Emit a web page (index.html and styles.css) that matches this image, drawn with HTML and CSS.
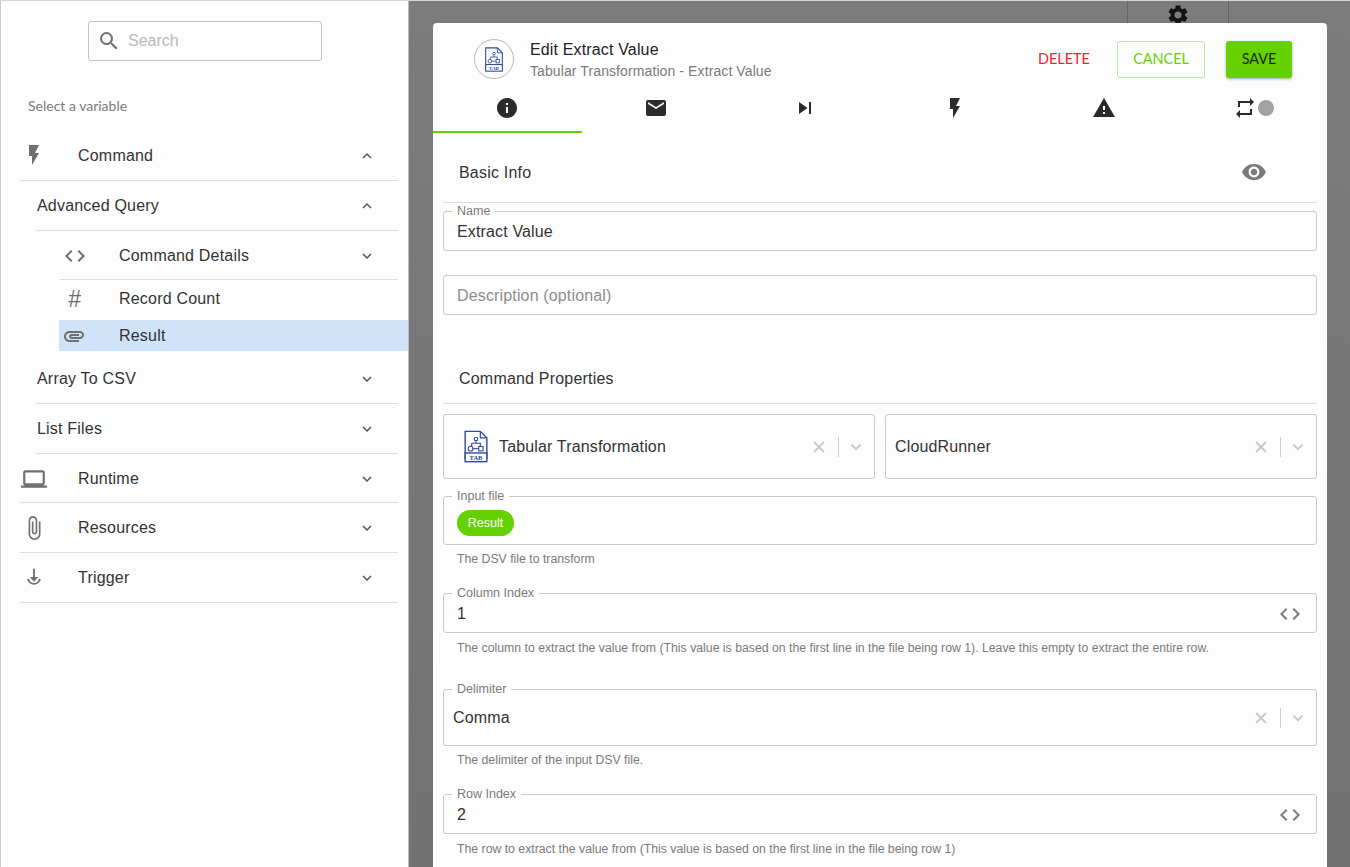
FILE: index.html
```html
<!DOCTYPE html>
<html lang="en">
<head>
    <meta charset="UTF-8">
    <title>Edit Extract Value</title>
    <link rel="stylesheet" href="styles.css">
</head>
<body>
    <svg class="defs" width="0" height="0">
        <symbol id="i-search" viewBox="0 0 24 24"><path d="M15.5 14h-.79l-.28-.27A6.471 6.471 0 0 0 16 9.5 6.5 6.5 0 1 0 9.5 16c1.61 0 3.09-.59 4.23-1.57l.27.28v.79l5 4.99L20.49 19l-4.99-5zm-6 0C7.01 14 5 11.99 5 9.5S7.01 5 9.5 5 14 7.01 14 9.5 11.99 14 9.5 14z"/></symbol>
        <symbol id="i-flash" viewBox="0 0 24 24"><path d="M7 2v11h3v9l7-12h-4l4-8z"/></symbol>
        <symbol id="i-code" viewBox="0 0 24 24"><path d="M9.4 16.6L4.8 12l4.6-4.6L8 6l-6 6 6 6 1.4-1.4zm5.2 0l4.6-4.6-4.6-4.6L16 6l6 6-6 6-1.4-1.4z"/></symbol>
        <symbol id="i-down" viewBox="0 0 24 24"><path d="M16.59 8.59L12 13.17 7.41 8.59 6 10l6 6 6-6z"/></symbol>
        <symbol id="i-up" viewBox="0 0 24 24"><path d="M12 8l-6 6 1.41 1.41L12 10.83l4.59 4.58L18 14z"/></symbol>
        <symbol id="i-attachment" viewBox="0 0 24 24"><path d="M2 12.5C2 9.46 4.46 7 7.5 7H18c2.21 0 4 1.79 4 4s-1.79 4-4 4H9.5C8.12 15 7 13.88 7 12.5S8.12 10 9.5 10H17v2H9.41c-.55 0-.55 1 0 1H18c1.1 0 2-.9 2-2s-.9-2-2-2H7.5C5.57 9 4 10.57 4 12.5S5.57 16 7.5 16H17v2H7.5C4.46 18 2 15.54 2 12.5z"/></symbol>
        <symbol id="i-laptop" viewBox="0 0 24 24"><path d="M20 18c1.1 0 1.99-.9 1.99-2L22 6c0-1.1-.9-2-2-2H4c-1.1 0-2 .9-2 2v10c0 1.1.9 2 2 2H0v2h24v-2h-4zM4 6h16v10H4V6z"/></symbol>
        <symbol id="i-clip" viewBox="0 0 24 24"><path d="M16.5 6v11.5c0 2.21-1.79 4-4 4s-4-1.79-4-4V5c0-1.38 1.12-2.5 2.5-2.5s2.5 1.12 2.5 2.5v10.5c0 .55-.45 1-1 1s-1-.45-1-1V6H10v9.5c0 1.38 1.12 2.5 2.5 2.5s2.5-1.12 2.5-2.5V5c0-2.21-1.79-4-4-4S7 2.79 7 5v12.5c0 3.04 2.46 5.5 5.5 5.5s5.5-2.46 5.5-5.5V6h-1.5z"/></symbol>
        <symbol id="i-trigger" viewBox="0 0 24 24"><path d="M11 2h2v9h3.5L12 16l-4.5-5H11z"/><path d="M4.5 13h2.2a5.4 5.4 0 0 0 10.6 0h2.2a7.6 7.6 0 0 1-15 0z"/></symbol>
        <symbol id="i-info" viewBox="0 0 24 24"><path d="M12 2C6.48 2 2 6.48 2 12s4.48 10 10 10 10-4.48 10-10S17.52 2 12 2zm1 15h-2v-6h2v6zm0-8h-2V7h2v2z"/></symbol>
        <symbol id="i-email" viewBox="0 0 24 24"><path d="M20 4H4c-1.1 0-1.99.9-1.99 2L2 18c0 1.1.9 2 2 2h16c1.1 0 2-.9 2-2V6c0-1.1-.9-2-2-2zm0 4l-8 5-8-5V6l8 5 8-5v2z"/></symbol>
        <symbol id="i-next" viewBox="0 0 24 24"><path d="M6 18l8.5-6L6 6v12zM16 6v12h2V6h-2z"/></symbol>
        <symbol id="i-warning" viewBox="0 0 24 24"><path d="M1 21h22L12 2 1 21zm12-3h-2v-2h2v2zm0-4h-2v-4h2v4z"/></symbol>
        <symbol id="i-repeat" viewBox="0 0 24 24"><path d="M7 7h10v3l4-4-4-4v3H5v6h2V7zm10 10H7v-3l-4 4 4 4v-3h12v-6h-2v4z"/></symbol>
        <symbol id="i-eye" viewBox="0 0 24 24"><path d="M12 4.5C7 4.5 2.73 7.61 1 12c1.73 4.39 6 7.5 11 7.5s9.27-3.11 11-7.5c-1.73-4.39-6-7.5-11-7.5zM12 17c-2.76 0-5-2.24-5-5s2.24-5 5-5 5 2.24 5 5-2.24 5-5 5zm0-8c-1.66 0-3 1.34-3 3s1.34 3 3 3 3-1.34 3-3-1.34-3-3-3z"/></symbol>
        <symbol id="i-gear" viewBox="0 0 24 24"><path d="M19.14 12.94c.04-.3.06-.61.06-.94 0-.32-.02-.64-.07-.94l2.03-1.58c.18-.14.23-.41.12-.61l-1.92-3.32c-.12-.22-.37-.29-.59-.22l-2.39.96c-.5-.38-1.03-.7-1.62-.94l-.36-2.54c-.04-.24-.24-.41-.48-.41h-3.84c-.24 0-.43.17-.47.41l-.36 2.54c-.59.24-1.13.57-1.62.94l-2.39-.96c-.22-.08-.47 0-.59.22L2.74 8.87c-.12.21-.08.47.12.61l2.03 1.58c-.05.3-.09.63-.09.94s.02.64.07.94l-2.03 1.58c-.18.14-.23.41-.12.61l1.92 3.32c.12.22.37.29.59.22l2.39-.96c.5.38 1.03.7 1.62.94l.36 2.54c.05.24.24.41.48.41h3.84c.24 0 .44-.17.47-.41l.36-2.54c.59-.24 1.13-.56 1.62-.94l2.39.96c.22.08.47 0 .59-.22l1.92-3.32c.12-.22.07-.47-.12-.61l-2.01-1.58zM12 15.6c-1.98 0-3.6-1.62-3.6-3.6s1.62-3.6 3.6-3.6 3.6 1.62 3.6 3.6-1.62 3.6-3.6 3.6z"/></symbol>
        <symbol id="i-close" viewBox="0 0 24 24"><path d="M19 6.41L17.59 5 12 10.59 6.41 5 5 6.41 10.59 12 5 17.59 6.41 19 12 13.41 17.59 19 19 17.59 13.41 12z"/></symbol>
        <symbol id="i-tab" viewBox="0 0 24 30">
            <path d="M2 1h14l6 6v19H2z" fill="none" stroke="#2f4a9c" stroke-width="1.3"/>
            <path d="M16 1v6h6" fill="none" stroke="#2f4a9c" stroke-width="1.1"/>
            <circle cx="12" cy="8" r="1.6" fill="none" stroke="#2f4a9c"/>
            <path d="M8 12h8v3M8 12v3M12 10v2" fill="none" stroke="#2f4a9c"/>
            <circle cx="7" cy="17" r="2.2" fill="none" stroke="#2f4a9c"/>
            <rect x="14.5" y="15" width="4" height="4" fill="none" stroke="#2f4a9c"/>
            <path d="M9 17h5.5" stroke="#2f4a9c"/>
            <rect x="2" y="21" width="20" height="8" fill="#fff" stroke="#2f4a9c" stroke-width="1.3"/>
            <text x="12" y="27.6" text-anchor="middle" class="tab-text">TAB</text>
        </symbol>
    </svg>

    <div class="page">
        <!-- left variable picker -->
        <aside class="sidebar">
            <div class="search-wrap">
                <div class="search">
                    <svg class="search-icon"><use href="#i-search"/></svg>
                    <span>Search</span>
                </div>
            </div>
            <div class="select-title">Select a variable</div>

            <div class="tree">
                <div class="row">
                    <span class="row-icon"><svg class="ic-flash"><use href="#i-flash"/></svg></span>
                    <span class="row-label">Command</span>
                    <svg class="chev"><use href="#i-up"/></svg>
                </div>
                <div class="row sub">
                    <span class="row-label">Advanced Query</span>
                    <svg class="chev"><use href="#i-up"/></svg>
                </div>
                <div class="row leaf">
                    <span class="row-icon"><svg class="ic-code"><use href="#i-code"/></svg></span>
                    <span class="row-label">Command Details</span>
                    <svg class="chev"><use href="#i-down"/></svg>
                </div>
                <div class="item first">
                    <span class="row-icon hash">#</span>
                    <span class="row-label">Record Count</span>
                </div>
                <div class="item selected">
                    <span class="row-icon"><svg class="ic-code"><use href="#i-attachment"/></svg></span>
                    <span class="row-label">Result</span>
                </div>
                <div class="row sub after-items">
                    <span class="row-label">Array To CSV</span>
                    <svg class="chev"><use href="#i-down"/></svg>
                </div>
                <div class="row sub">
                    <span class="row-label">List Files</span>
                    <svg class="chev"><use href="#i-down"/></svg>
                </div>
                <div class="row short">
                    <span class="row-icon"><svg class="ic-laptop"><use href="#i-laptop"/></svg></span>
                    <span class="row-label">Runtime</span>
                    <svg class="chev"><use href="#i-down"/></svg>
                </div>
                <div class="row">
                    <span class="row-icon"><svg class="ic-clip"><use href="#i-clip"/></svg></span>
                    <span class="row-label">Resources</span>
                    <svg class="chev"><use href="#i-down"/></svg>
                </div>
                <div class="row">
                    <span class="row-icon"><svg class="ic-trigger"><use href="#i-trigger"/></svg></span>
                    <span class="row-label">Trigger</span>
                    <svg class="chev"><use href="#i-down"/></svg>
                </div>
            </div>
        </aside>

        <!-- dimmed canvas with the modal on top -->
        <main class="backdrop">
            <div class="behind-node"><svg><use href="#i-gear"/></svg></div>

            <section class="modal">
                <header class="modal-head">
                    <div class="head-logo"><svg><use href="#i-tab"/></svg></div>
                    <div class="head-text">
                        <h1>Edit Extract Value</h1>
                        <p>Tabular Transformation - Extract Value</p>
                    </div>
                    <button class="btn-delete">DELETE</button>
                    <button class="btn-cancel">CANCEL</button>
                    <button class="btn-save">SAVE</button>
                </header>

                <nav class="tabs">
                    <div class="tab active"><svg><use href="#i-info"/></svg></div>
                    <div class="tab"><svg><use href="#i-email"/></svg></div>
                    <div class="tab"><svg><use href="#i-next"/></svg></div>
                    <div class="tab"><svg><use href="#i-flash"/></svg></div>
                    <div class="tab"><svg><use href="#i-warning"/></svg></div>
                    <div class="tab last"><svg><use href="#i-repeat"/></svg><span class="dot"></span></div>
                </nav>

                <div class="form">
                    <div class="section-head">
                        <span>Basic Info</span>
                        <svg class="eye"><use href="#i-eye"/></svg>
                    </div>

                    <div class="field name-field">
                        <label>Name</label>
                        <span class="value">Extract Value</span>
                    </div>
                    <div class="field desc-field">
                        <span class="placeholder">Description (optional)</span>
                    </div>

                    <div class="section-head props-head">
                        <span>Command Properties</span>
                    </div>

                    <div class="select-row">
                        <div class="select">
                            <svg class="select-logo"><use href="#i-tab"/></svg>
                            <span class="value">Tabular Transformation</span>
                            <svg class="sel-x"><use href="#i-close"/></svg>
                            <span class="sel-sep"></span>
                            <svg class="sel-chev"><use href="#i-down"/></svg>
                        </div>
                        <div class="select">
                            <span class="value">CloudRunner</span>
                            <svg class="sel-x"><use href="#i-close"/></svg>
                            <span class="sel-sep"></span>
                            <svg class="sel-chev"><use href="#i-down"/></svg>
                        </div>
                    </div>

                    <div class="field input-file">
                        <label>Input file</label>
                        <span class="chip">Result</span>
                    </div>
                    <p class="help">The DSV file to transform</p>

                    <div class="field column-field">
                        <label>Column Index</label>
                        <span class="value">1</span>
                        <svg class="code-btn"><use href="#i-code"/></svg>
                    </div>
                    <p class="help">The column to extract the value from (This value is based on the first line in the file being row 1). Leave this empty to extract the entire row.</p>

                    <div class="field delim-field">
                        <label>Delimiter</label>
                        <span class="value">Comma</span>
                        <svg class="sel-x"><use href="#i-close"/></svg>
                        <span class="sel-sep"></span>
                        <svg class="sel-chev"><use href="#i-down"/></svg>
                    </div>
                    <p class="help">The delimiter of the input DSV file.</p>

                    <div class="field row-field">
                        <label>Row Index</label>
                        <span class="value">2</span>
                        <svg class="code-btn"><use href="#i-code"/></svg>
                    </div>
                    <p class="help">The row to extract the value from (This value is based on the first line in the file being row 1)</p>
                </div>
            </section>
        </main>
    </div>
</body>
</html>
```

FILE: styles.css
```css
:root {
    --green: #66d100;
    --line: #dedede;
    --field-line: #c9c9c9;
    --text: #333333;
    --grey: #7b7b7b;
    --bg: #fdfdfd;
}

* {
    margin: 0;
    padding: 0;
    box-sizing: border-box;
}

html, body {
    height: 867px;
    overflow: hidden;
}

body {
    font-family: "Liberation Sans", Arial, sans-serif;
    color: var(--text);
    background: var(--bg);
}

.defs {
    display: none;
}

.tab-text {
    font-family: "Liberation Serif", serif;
    font-size: 6px;
    font-weight: bold;
    fill: #2f4a9c;
}

.page {
    display: flex;
    height: 867px;
    border-top: 1px solid #d4d4d4;
}

/* sidebar */
.sidebar {
    width: 409px;
    flex-shrink: 0;
    background: var(--bg);
    border-left: 1px solid #c8c8c8;
    border-right: 1px solid #bdbdbd;
}

.search-wrap {
    padding: 20px 0 0 87px;
}

.search {
    width: 234px;
    height: 40px;
    display: flex;
    align-items: center;
    padding-left: 8px;
    border: 1px solid #c4c4c4;
    border-radius: 3px;
    font-size: 16px;
    color: #b9b9b9;
}

.search-icon {
    width: 24px;
    height: 24px;
    margin-right: 7px;
    fill: #6f6f6f;
}

.select-title {
    margin: 36px 0 0 27px;
    height: 18px;
    line-height: 18px;
    font-family: Lato, sans-serif;
    font-size: 14px;
    color: var(--grey);
}

.tree {
    margin-top: 16px;
    padding-right: 10px;
}

.row {
    display: flex;
    align-items: center;
    height: 50px;
    margin-left: 19px;
    border-bottom: 1px solid var(--line);
    padding-right: 22px;
}

.row.sub {
    margin-left: 35px;
    padding-left: 1px;
}

.row.leaf {
    margin-left: 59px;
    height: 49px;
    padding-top: 1px;
}

.row.short {
    height: 49px;
    padding-top: 1px;
}

.row-icon {
    width: 58px;
    display: flex;
    align-items: center;
    justify-content: flex-start;
    flex-shrink: 0;
    color: #6f6f6f;
    fill: #6f6f6f;
}

.row.leaf .row-icon {
    width: 59px;
}

.row-label {
    flex: 1;
    font-size: 16px;
    letter-spacing: 0.2px;
    color: var(--text);
}

.chev {
    width: 18px;
    height: 18px;
    fill: #555;
}

.ic-flash {
    width: 28px;
    height: 24px;
    margin-top: -2px;
}

.ic-code {
    width: 24px;
    height: 24px;
    margin-left: 3px;
}

.ic-laptop {
    width: 26px;
    height: 26px;
    margin-left: 1px;
}

.ic-clip {
    width: 26px;
    height: 26px;
    margin-left: 1px;
}

.ic-trigger {
    width: 22px;
    height: 22px;
    margin-left: 3px;
}

.item {
    display: flex;
    align-items: center;
    margin-left: 58px;
    height: 31px;
    margin-right: -10px;
}

.item.first {
    height: 40px;
    padding-bottom: 2px;
}

.item.selected {
    background: #cfe3f9;
}

.item .row-icon {
    width: 60px;
}

.hash {
    font-size: 23px;
    font-style: italic;
    padding-left: 9px;
}

.row.after-items {
    height: 53px;
    padding-top: 3px;
}

/* backdrop */
.backdrop {
    position: relative;
    flex: 1;
    padding: 22px 23px 0 24px;
    background: linear-gradient(#7c7c7c, #727272);
    overflow: hidden;
}

.behind-node {
    position: absolute;
    top: -1px;
    left: 718px;
    width: 102px;
    height: 24px;
    display: flex;
    justify-content: center;
    border-left: 1px solid #666;
    border-right: 1px solid #666;
}

.behind-node svg {
    width: 24px;
    height: 24px;
    margin-top: 3px;
    fill: #141414;
}

.modal {
    position: relative;
    width: 894px;
    height: 860px;
    background: var(--bg);
    border-radius: 4px 4px 0 0;
}

.modal-head {
    display: flex;
    align-items: center;
    height: 70px;
    padding: 2px 35px 0 41px;
}

.head-logo {
    width: 40px;
    height: 40px;
    margin-right: 16px;
    display: flex;
    align-items: center;
    justify-content: center;
    border: 1px solid #b9b9b9;
    border-radius: 50%;
}

.head-logo svg {
    width: 20px;
    height: 25px;
}

.head-text {
    flex: 1;
    padding-top: 1px;
}

.head-text h1 {
    font-size: 16px;
    font-weight: normal;
    line-height: 20px;
    letter-spacing: 0.15px;
    color: #222;
}

.head-text p {
    margin-top: 2px;
    font-size: 14px;
    line-height: 18px;
    letter-spacing: 0.1px;
    color: var(--grey);
}

.modal-head button {
    font-family: Lato, sans-serif;
    font-size: 14.4px;
    height: 37px;
    padding-bottom: 2px;
    border-radius: 3px;
    background: none;
    border: none;
}

.btn-delete {
    width: 51px;
    color: #f5222d;
    margin-right: 28px;
}

.modal-head .btn-cancel {
    width: 88px;
    color: var(--green);
    border: 1px solid #b9e89a;
    margin-right: 21px;
}

.modal-head .btn-save {
    width: 66px;
    color: #1c2b0a;
    background: var(--green);
    box-shadow: 0 1px 3px rgba(0, 0, 0, 0.35);
}

.tabs {
    display: flex;
    height: 40px;
}

.tab {
    flex: 1;
    display: flex;
    align-items: center;
    justify-content: center;
    height: 40px;
    padding: 0 2px 10px 0;
    fill: #2b2b2b;
}

.tab svg {
    width: 24px;
    height: 24px;
}

.tab.active {
    border-bottom: 2px solid var(--green);
    padding-bottom: 8px;
}

.tab.last {
    padding-right: 0;
}

.dot {
    width: 16px;
    height: 16px;
    margin-left: 1px;
    border-radius: 50%;
    background: #a3a3a3;
}

/* form */
.form {
    padding: 0 10px;
}

.section-head {
    display: flex;
    align-items: center;
    justify-content: space-between;
    height: 70px;
    padding: 10px 50px 0 16px;
    border-bottom: 1px solid var(--line);
    font-size: 16px;
    letter-spacing: 0.2px;
    color: var(--text);
}

.eye {
    width: 26px;
    height: 26px;
    margin-top: -2px;
    fill: #7a7a7a;
}

.field {
    position: relative;
    display: flex;
    align-items: center;
    height: 40px;
    padding: 1px 14px 0 13px;
    border: 1px solid var(--field-line);
    border-radius: 3px;
}

.field label {
    position: absolute;
    top: -8px;
    left: 8px;
    padding: 0 5px;
    background: var(--bg);
    font-size: 12.5px;
    line-height: 14px;
    color: var(--grey);
}

.value {
    flex: 1;
    font-size: 16px;
    letter-spacing: 0.15px;
    color: var(--text);
}

.placeholder {
    font-size: 16px;
    letter-spacing: 0.15px;
    color: #8d8d8d;
}

.name-field {
    margin-top: 8px;
}

.desc-field {
    margin-top: 24px;
}

.section-head.props-head {
    height: 89px;
    padding-top: 40px;
}

.select-row {
    display: flex;
    gap: 10px;
    margin-top: 10px;
}

.select {
    flex: 1;
    display: flex;
    align-items: center;
    height: 65px;
    padding: 0 8px 0 9px;
    border: 1px solid var(--field-line);
    border-radius: 3px;
}

.select-logo {
    width: 26px;
    height: 33px;
    margin: 0 10px;
}

.sel-x {
    width: 18px;
    height: 18px;
    fill: #c9c9c9;
    stroke: #c9c9c9;
    stroke-width: 1;
}

.sel-sep {
    width: 1px;
    height: 20px;
    margin: 0 7px 0 10px;
    background: #cfcfcf;
}

.sel-chev {
    width: 20px;
    height: 20px;
    fill: #c9c9c9;
    stroke: #c9c9c9;
    stroke-width: 0.6;
}

.field.input-file {
    height: 49px;
    margin-top: 17px;
    padding-top: 4px;
}

.chip {
    display: flex;
    align-items: center;
    justify-content: center;
    width: 57px;
    height: 26px;
    border-radius: 13px;
    background: var(--green);
    color: #fff;
    font-size: 12.5px;
}

.help {
    height: 48px;
    padding: 7px 0 0 14px;
    font-size: 12.27px;
    line-height: 15px;
    color: var(--grey);
}

.code-btn {
    width: 24px;
    height: 24px;
    fill: #7a7a7a;
}

.field.delim-field {
    height: 57px;
    padding: 0 8px 0 9px;
}

.column-field + .help {
    height: 56px;
    padding-top: 8px;
}

.delim-field + .help {
    height: 48px;
}

.row-field + .help {
    padding-top: 8px;
}
```
